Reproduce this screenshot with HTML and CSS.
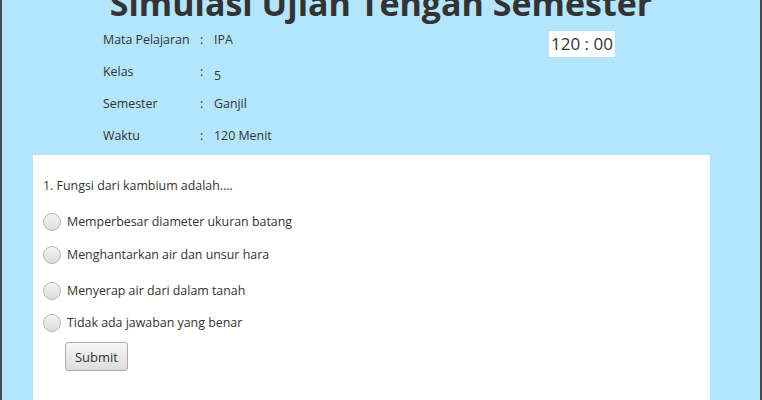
FILE: index.html
```html
<!DOCTYPE html>
<html lang="id">
<head>
    <meta charset="UTF-8">
    <meta name="viewport" content="width=device-width, initial-scale=1.0">
    <title>Simulasi Ujian Tengah Semester</title>
    <link rel="stylesheet" href="styles.css">
</head>
<body>
    <div class="page">
        <h1 class="title">Simulasi Ujian Tengah Semester</h1>

        <div class="header">
            <div class="info">
                <div class="info-label">Mata Pelajaran</div><div class="info-sep">:</div><div class="info-value">IPA</div>
                <div class="info-label">Kelas</div><div class="info-sep">:</div><div class="info-value low">5</div>
                <div class="info-label">Semester</div><div class="info-sep">:</div><div class="info-value">Ganjil</div>
                <div class="info-label">Waktu</div><div class="info-sep">:</div><div class="info-value">120 Menit</div>
            </div>
            <div class="timer" id="timer">120 : 00</div>
        </div>

        <form class="quiz" id="quiz">
            <p class="question">1. Fungsi dari kambium adalah....</p>
            <label class="option"><input type="radio" name="q1" value="a"><span>Memperbesar diameter ukuran batang</span></label>
            <label class="option"><input type="radio" name="q1" value="b"><span>Menghantarkan air dan unsur hara</span></label>
            <label class="option gap"><input type="radio" name="q1" value="c"><span>Menyerap air dari dalam tanah</span></label>
            <label class="option last"><input type="radio" name="q1" value="d"><span>Tidak ada jawaban yang benar</span></label>
            <button type="submit">Submit</button>
        </form>
    </div>
</body>
</html>
```

FILE: styles.css
```css
body {
    margin: 0;
    background: #4a4a4a;
    font-family: 'Open Sans', 'Noto Sans', sans-serif;
    color: #333;
}

.page {
    margin: 0 2px;
    height: 400px;
    overflow: hidden;
    background-color: #b3e5fc;
}

.title {
    margin: -14px 0 0 0;
    font-size: 34px;
    font-weight: 700;
    line-height: 34px;
    text-align: center;
    color: #333;
}

.header {
    display: flex;
    align-items: flex-start;
    box-sizing: border-box;
    height: 135px;
    padding: 4px 0 0 101px;
}

.info {
    display: grid;
    grid-template-columns: 97px 14px auto;
    grid-auto-rows: 32px;
    width: 446px;
    font-size: 12.4px;
    line-height: 32px;
}

.info-value.low {
    padding-top: 4px;
}

.timer {
    margin-top: 7px;
    padding: 3px 2px;
    background: white;
    font-size: 17px;
    line-height: 20px;
}

.quiz {
    margin: 0 50px 0 31px;
    padding: 20px 10px 60px 10px;
    background: white;
    font-size: 12.4px;
}

.question {
    margin: 0 0 8px 0;
    line-height: 22px;
}

.option {
    display: flex;
    align-items: center;
    height: 33px;
}

.option.gap {
    margin-top: 3px;
}

.option.last {
    margin-top: -1px;
}

.option input {
    appearance: none;
    width: 18px;
    height: 18px;
    margin: 0 6px 0 0;
    border: 1px solid #b5b5b5;
    border-radius: 50%;
    background: linear-gradient(#f4f4f4, #dcdcdc);
}

.quiz button {
    margin: 3px 0 0 22px;
    width: 63px;
    height: 29px;
    font-family: inherit;
    font-size: 13px;
    color: #333;
    background: linear-gradient(#f6f6f6, #dddddd);
    border: 1px solid #acacac;
    border-radius: 3px;
}
```
